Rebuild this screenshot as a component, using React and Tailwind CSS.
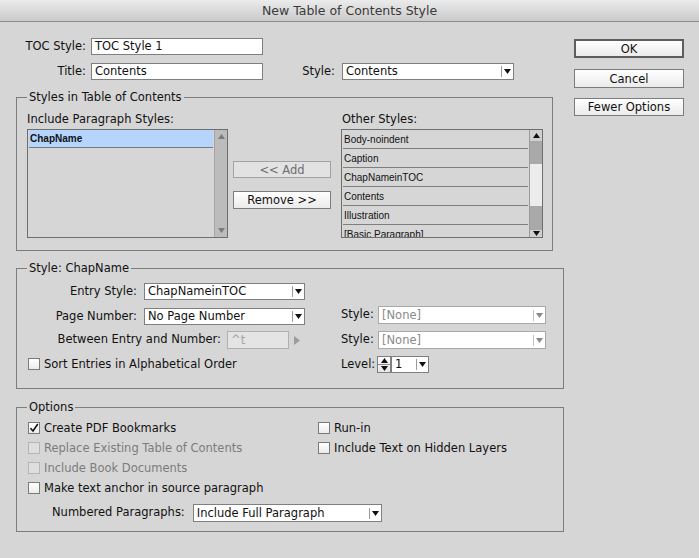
import React from "react";

const Arrow = ({ color = "#111" }) => (
  <svg width="7" height="5" viewBox="0 0 7 5"><path d="M0 0H7L3.5 5Z" fill={color} /></svg>
);

const UpArrow = ({ color = "#111" }) => (
  <svg width="7" height="5" viewBox="0 0 7 5"><path d="M0 5H7L3.5 0Z" fill={color} /></svg>
);

function Dropdown({ w, h = "h-[17px]", text, disabled }) {
  return (
    <div
      className={`flex items-center bg-white border ${disabled ? "border-[#a9a9a9] text-[#8a8a8a]" : "border-[#7f7f7f] text-[#111]"} ${w} ${h}`}
    >
      <span className="flex-1 pl-[3px] truncate leading-[15px]">{text}</span>
      <div className={`w-px h-[11px] ${disabled ? "bg-[#c4c4c4]" : "bg-[#9a9a9a]"}`} />
      <div className="w-[11px] flex items-center justify-center">
        <Arrow color={disabled ? "#8a8a8a" : "#111"} />
      </div>
    </div>
  );
}

function TextInput({ w, text }) {
  return (
    <div className={`flex items-center bg-white border border-[#7f7f7f] h-[17px] pl-[3px] text-[#111] leading-[15px] ${w}`}>
      {text}
    </div>
  );
}

function Check({ checked, disabled, label }) {
  return (
    <div className="flex items-center h-[14px]">
      <div
        className={`w-[12px] h-[12px] border flex items-center justify-center ${disabled ? "border-[#b5b5b5] bg-[#dedede]" : "border-[#7a7a7a] bg-gradient-to-b from-[#ffffff] to-[#ececec]"}`}
      >
        {checked && (
          <svg width="10" height="10" viewBox="0 0 10 10">
            <path d="M1.5 5.2L4 8L8.8 1" stroke="#111" strokeWidth="1.6" fill="none" />
          </svg>
        )}
      </div>
      <span className={`ml-[4px] leading-[14px] ${disabled ? "text-[#7c7c7c]" : "text-[#111]"}`}>{label}</span>
    </div>
  );
}

function Button({ children, h = "h-[19px]", def, disabled }) {
  return (
    <div
      className={`flex items-center justify-center leading-[14px] ${h} ${def ? "border-2 border-[#5e5e5e]" : disabled ? "border border-[#a2a2a2]" : "border border-[#7c7c7c]"} ${disabled ? "bg-[#e2e2e2] text-[#6e6e6e]" : "bg-gradient-to-b from-[#ffffff] to-[#ebebeb] text-[#111]"}`}
    >
      {children}
    </div>
  );
}

function Group({ title, w, className = "", children }) {
  return (
    <fieldset className={`border border-[#7d7d7d] ${w} ${className}`}>
      <legend className="ml-[10px] px-[2px] leading-[14px] text-[#111]">{title}</legend>
      {children}
    </fieldset>
  );
}

const others = ["Body-noindent", "Caption", "ChapNameinTOC", "Contents", "Illustration", "[Basic Paragraph]"];

export default function App() {
  return (
    <div className="w-[699px] h-[558px] bg-[#d6d6d6] font-['DejaVu_Sans',sans-serif] text-[11.5px] text-[#111] overflow-hidden">
      <div className="h-[22px] border-b border-[#8c8c8c] bg-gradient-to-b from-[#ebebeb] to-[#cbcbcb] flex items-center justify-center text-[12.5px] text-[#3a3a3a] pt-[1px]">
        New Table of Contents Style
      </div>
      <div className="flex pl-[16px]">
        <div className="w-[548px]">
          <div className="flex items-center h-[17px] mt-[16px]">
            <div className="w-[70px] text-right">TOC Style:</div>
            <div className="ml-[5px]"><TextInput w="w-[172px]" text="TOC Style 1" /></div>
          </div>
          <div className="flex items-center h-[17px] mt-[8px]">
            <div className="w-[70px] text-right">Title:</div>
            <div className="ml-[5px]"><TextInput w="w-[172px]" text="Contents" /></div>
            <div className="w-[72px] text-right">Style:</div>
            <div className="ml-[7px]"><Dropdown w="w-[172px]" text="Contents" /></div>
          </div>

          <Group title="Styles in Table of Contents" w="w-[537px]" className="mt-[10px]">
            <div className="flex pl-[10px] pt-[8px] pb-[12px]">
              <div className="w-[201px]">
                <div className="h-[14px] leading-[14px]">Include Paragraph Styles:</div>
                <div className="mt-[3px] h-[109px] border border-[#6e6e6e] flex">
                  <div className="flex-1 px-[1px]">
                    <div className="h-[18px] bg-[#b5d5ff] border-b border-[#7a7a7a] flex items-center pl-[1px] font-['Liberation_Sans',sans-serif] font-bold text-[10px]">
                      ChapName
                    </div>
                  </div>
                  <div className="w-[13px] bg-[#bcbcbc] border-l border-[#a5a5a5] flex flex-col items-center justify-between py-[4px]">
                    <UpArrow color="#7a7a7a" />
                    <Arrow color="#7a7a7a" />
                  </div>
                </div>
              </div>
              <div className="ml-[5px] w-[98px] pt-[49px]">
                <Button h="h-[17px]" disabled>&lt;&lt; Add</Button>
                <div className="mt-[13px]"><Button h="h-[18px]">Remove &gt;&gt;</Button></div>
              </div>
              <div className="ml-[10px] w-[202px]">
                <div className="h-[14px] leading-[14px] pl-[1px]">Other Styles:</div>
                <div className="mt-[3px] h-[109px] border border-[#6e6e6e] flex overflow-hidden">
                  <div className="flex-1 px-[1px] overflow-hidden">
                    {others.map((o) => (
                      <div
                        key={o}
                        className="h-[19px] border-b border-[#7e7e7e] flex items-center pl-[1px] font-['Liberation_Sans',sans-serif] text-[10px] text-[#111]"
                      >
                        {o}
                      </div>
                    ))}
                  </div>
                  <div className="w-[13px] border-l border-[#9a9a9a] flex flex-col">
                    <div className="h-[11px] bg-[#d0d0d0] flex items-center justify-center"><UpArrow /></div>
                    <div className="h-[23px] bg-[#a9a9a9]" />
                    <div className="h-[42px] bg-[#ececec]" />
                    <div className="h-[24px] bg-[#a9a9a9]" />
                    <div className="flex-1 bg-[#d0d0d0] flex items-center justify-center"><Arrow /></div>
                  </div>
                </div>
              </div>
            </div>
          </Group>

          <Group title="Style: ChapName" w="w-[548px]" className="mt-[10px]">
            <div className="flex pb-[15px]">
              <div className="w-[324px] pt-[8px]">
                <div className="flex items-center h-[17px]">
                  <div className="w-[120px] text-right">Entry Style:</div>
                  <div className="ml-[7px]"><Dropdown w="w-[161px]" text="ChapNameinTOC" /></div>
                </div>
                <div className="flex items-center h-[17px] mt-[8px]">
                  <div className="w-[120px] text-right">Page Number:</div>
                  <div className="ml-[7px]"><Dropdown w="w-[161px]" text="No Page Number" /></div>
                </div>
                <div className="flex items-center h-[18px] mt-[6px]">
                  <div className="w-[204px] text-right">Between Entry and Number:</div>
                  <div className="ml-[6px] w-[62px] h-[18px] border border-[#b0b0b0] bg-[#e4e4e4] text-[#a3a3a3] flex items-center pl-[3px] leading-[14px]">^t</div>
                  <svg className="ml-[5px]" width="6" height="9" viewBox="0 0 6 9"><path d="M0 0L6 4.5L0 9Z" fill="#9c9c9c" /></svg>
                </div>
                <div className="mt-[8px] pl-[11px]">
                  <Check label="Sort Entries in Alphabetical Order" />
                </div>
              </div>
              <div className="pt-[31px]">
                <div className="flex items-center h-[18px]">
                  <div className="w-[37px]">Style:</div>
                  <Dropdown w="w-[168px]" h="h-[18px]" text="[None]" disabled />
                </div>
                <div className="flex items-center h-[18px] mt-[7px]">
                  <div className="w-[37px]">Style:</div>
                  <Dropdown w="w-[168px]" h="h-[18px]" text="[None]" disabled />
                </div>
                <div className="flex items-center h-[17px] mt-[7px]">
                  <div className="w-[36px]">Level:</div>
                  <div className="w-[14px] h-[17px] border border-[#7f7f7f] bg-gradient-to-b from-[#ffffff] to-[#e6e6e6] flex flex-col">
                    <div className="flex-1 flex items-center justify-center border-b border-[#8a8a8a]"><UpArrow /></div>
                    <div className="flex-1 flex items-center justify-center"><Arrow /></div>
                  </div>
                  <Dropdown w="w-[38px]" text="1" />
                </div>
              </div>
            </div>
          </Group>

          <Group title="Options" w="w-[548px]" className="mt-[11px]">
            <div className="pt-[7px] pb-[9px]">
              <div className="flex">
                <div className="w-[301px] pl-[11px] flex flex-col gap-[6px]">
                  <Check checked label="Create PDF Bookmarks" />
                  <Check disabled label="Replace Existing Table of Contents" />
                  <Check disabled label="Include Book Documents" />
                  <Check label="Make text anchor in source paragraph" />
                </div>
                <div className="flex flex-col gap-[6px]">
                  <Check label="Run-in" />
                  <Check label="Include Text on Hidden Layers" />
                </div>
              </div>
              <div className="flex items-center h-[18px] mt-[9px] pl-[35px]">
                <div>Numbered Paragraphs:</div>
                <div className="ml-[8px]"><Dropdown w="w-[189px]" h="h-[18px]" text="Include Full Paragraph" /></div>
              </div>
            </div>
          </Group>
        </div>

        <div className="ml-[10px] w-[110px] pt-[17px]">
          <Button def>OK</Button>
          <div className="mt-[11px]"><Button>Cancel</Button></div>
          <div className="mt-[10px]"><Button h="h-[18px]">Fewer Options</Button></div>
        </div>
      </div>
    </div>
  );
}
